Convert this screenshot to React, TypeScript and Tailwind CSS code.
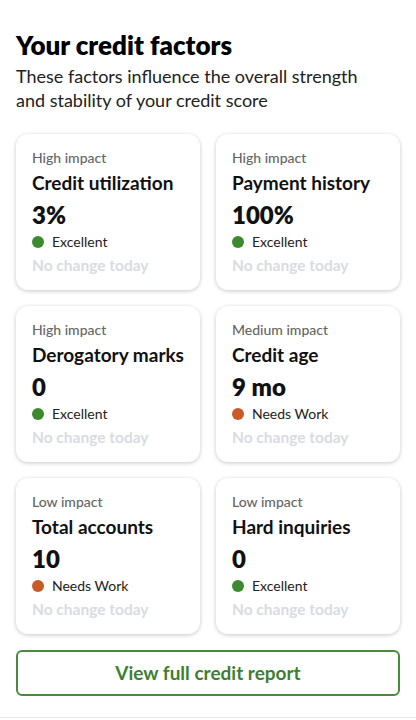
import React from "react";

type Factor = {
  impact: string;
  name: string;
  value: string;
  status: "Excellent" | "Needs Work";
};

const factors: Factor[] = [
  { impact: "High impact", name: "Credit utilization", value: "3%", status: "Excellent" },
  { impact: "High impact", name: "Payment history", value: "100%", status: "Excellent" },
  { impact: "High impact", name: "Derogatory marks", value: "0", status: "Excellent" },
  { impact: "Medium impact", name: "Credit age", value: "9 mo", status: "Needs Work" },
  { impact: "Low impact", name: "Total accounts", value: "10", status: "Needs Work" },
  { impact: "Low impact", name: "Hard inquiries", value: "0", status: "Excellent" },
];

function Card({ f }: { f: Factor }) {
  return (
    <div className="h-[156px] rounded-xl bg-white px-4 pt-[15px] shadow-[0_1px_4px_rgba(0,0,0,0.22)]">
      <div className="text-[14px] leading-[18px] font-medium text-[#666]">{f.impact}</div>
      <div className="mt-[4px] text-[19px] leading-[24px] font-bold text-[#111]">{f.name}</div>
      <div className="mt-[6px] text-[24px] leading-[28px] font-extrabold text-[#111]">{f.value}</div>
      <div className="mt-[4px] flex items-center gap-2 text-[14px] leading-[18px] text-[#222]">
        <span
          className={
            f.status === "Excellent"
              ? "h-3 w-3 rounded-full bg-[#3b8a2e]"
              : "h-3 w-3 rounded-full bg-[#c85a28]"
          }
        />
        <span>{f.status}</span>
      </div>
      <div className="mt-[4px] text-[15.5px] leading-[20px] font-bold text-[#d8dce2]">No change today</div>
    </div>
  );
}

export default function App() {
  return (
    <div
      className="min-h-[720px] w-[416px] bg-white"
      style={{ fontFamily: "Lato, sans-serif" }}
    >
      <div className="px-4 pt-[30px]">
        <h1 className="text-[26px] leading-[30px] font-extrabold text-black">Your credit factors</h1>
        <p className="mt-[4px] max-w-[370px] text-[18px] leading-[24px] text-[#222]">
          These factors influence the overall strength and stability of your credit score
        </p>
        <div className="mt-[22px] grid grid-cols-2 gap-4">
          {factors.map((f) => (
            <Card key={f.name} f={f} />
          ))}
        </div>
        <button className="mt-4 flex h-[46px] w-full items-center justify-center rounded-md border-2 border-[#4a8a3c] text-[19px] font-bold text-[#3d7f30]">
          View full credit report
        </button>
      </div>
      <div className="mt-[21px] h-px bg-[#e8e8e8]" />
    </div>
  );
}
